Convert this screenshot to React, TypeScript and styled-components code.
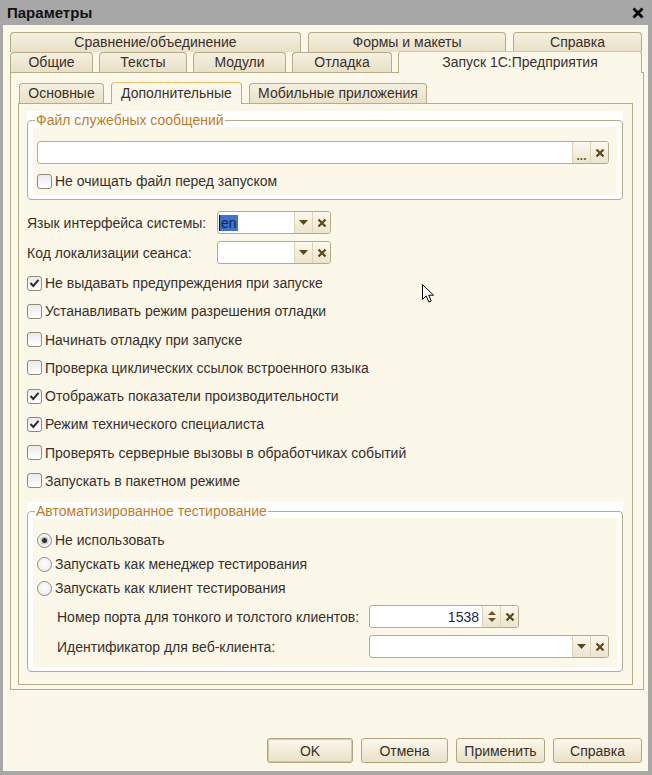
import styled, { createGlobalStyle } from "styled-components";

const GlobalStyle = createGlobalStyle`
  html, body {
    margin: 0;
    padding: 0;
  }
  body {
    font-family: "Liberation Sans", Arial, sans-serif;
    font-size: 14px;
    color: #3a2f28;
  }
  * {
    box-sizing: border-box;
  }
`;

const Window = styled.div`
  position: relative;
  width: 652px;
  height: 775px;
  background: #a7a7a7;
  display: flex;
  flex-direction: column;
  padding: 0 4px 4px 3px;
  overflow: hidden;
`;

const TitleBar = styled.div`
  height: 25px;
  margin: 0 -4px 0 -3px;
  padding: 0 8px 0 7px;
  display: flex;
  align-items: center;
  justify-content: space-between;
  font-size: 15px;
  font-weight: bold;
  color: #111;
`;

const Body = styled.div`
  flex: 1;
  background: #fbf8ea;
  display: flex;
  flex-direction: column;
`;

const TabStrip = styled.div<{ $top: number; $left: number }>`
  display: flex;
  flex-direction: column;
  padding: ${(p) => p.$top}px 0 0 ${(p) => p.$left}px;
`;

const TabRow = styled.div<{ $gap: number }>`
  display: flex;
  gap: ${(p) => p.$gap}px;
`;

const Tab = styled.div<{ $w: number; $active?: boolean }>`
  position: relative;
  z-index: ${(p) => (p.$active ? 2 : 0)};
  width: ${(p) => p.$w}px;
  height: ${(p) => (p.$active ? 22 : 20)}px;
  margin-top: ${(p) => (p.$active ? -1 : 0)}px;
  margin-bottom: ${(p) => (p.$active ? -1 : 0)}px;
  border: 1px solid #b6ac86;
  border-top-color: ${(p) => (p.$active ? "#efc46c" : "#b6ac86")};
  border-bottom: none;
  border-radius: 4px 4px 0 0;
  background: ${(p) =>
    p.$active ? "#fbf8ea" : "linear-gradient(#f5f0e0, #e8e0c6)"};
  display: flex;
  align-items: center;
  justify-content: center;
  font-size: 14px;
  padding-bottom: ${(p) => (p.$active ? 2 : 1)}px;
  white-space: nowrap;
`;

const Panel = styled.div<{ $pad: string }>`
  position: relative;
  border: 1px solid #b6ac86;
  background: #fbf8ea;
  padding: ${(p) => p.$pad};
`;

const OuterPanel = styled(Panel)`
  margin: 0 4px 0 7px;
`;

const GroupWrap = styled.div<{ $mt?: number }>`
  margin-top: ${(p) => p.$mt ?? 0}px;
  background: #fff;
  padding-top: 9px;
`;

const Frame = styled.div`
  position: relative;
  border: 1px solid #b6ac86;
  border-radius: 4px;
  background: #fff;
  padding: 6px 5px 4px 5px;
`;

const Legend = styled.span`
  position: absolute;
  top: -9px;
  left: 7px;
  padding: 0 1px;
  line-height: 16px;
  background: #fff;
  color: #c27b21;
`;

const GroupBody = styled.div<{ $pad: string }>`
  background: #fbf8ea;
  padding: ${(p) => p.$pad};
  display: flex;
  flex-direction: column;
`;

const FieldRow = styled.div<{ $mt: number; $label: number; $indent?: number }>`
  display: flex;
  align-items: center;
  margin-top: ${(p) => p.$mt}px;
  padding-left: ${(p) => p.$indent ?? 0}px;
  height: 23px;
  & > label {
    width: ${(p) => p.$label}px;
    flex: none;
    white-space: nowrap;
  }
`;

const Input = styled.div<{ $w: number }>`
  width: ${(p) => p.$w}px;
  height: 23px;
  flex: none;
  display: flex;
  border: 1px solid #b6ac86;
  border-radius: 3px;
  background: #fff;
  overflow: hidden;
`;

const InputText = styled.div<{ $right?: boolean }>`
  flex: 1;
  display: flex;
  align-items: center;
  justify-content: ${(p) => (p.$right ? "flex-end" : "flex-start")};
  padding: 0 3px 0 1px;
  color: #1f2a44;
`;

const Selected = styled.span`
  background: #3b73d4;
  color: #1b2340;
  border-left: 1px solid #111;
  padding: 0 1px;
  line-height: 16px;
`;

const InputButton = styled.div`
  width: 18px;
  flex: none;
  border-left: 1px solid #ddd4b4;
  background: linear-gradient(#fbf8ee, #ebe4cd);
  display: flex;
  flex-direction: column;
  align-items: center;
  justify-content: center;
  gap: 3px;
`;

const Dots = styled(InputButton)`
  justify-content: flex-end;
  padding-bottom: 4px;
  color: #6b5a2c;
  font-size: 12px;
  font-weight: bold;
  line-height: 6px;
`;

const CheckList = styled.div`
  margin-top: 5px;
  display: flex;
  flex-direction: column;
`;

const OptionRow = styled.div<{ $h: number; $mt?: number }>`
  height: ${(p) => p.$h}px;
  margin-top: ${(p) => p.$mt ?? 0}px;
  display: flex;
  align-items: center;
  gap: 3px;
  white-space: nowrap;
`;

const Box = styled.span`
  width: 15px;
  height: 15px;
  flex: none;
  border: 1px solid #8e8a78;
  border-radius: 3px;
  background: linear-gradient(#ebebeb, #ffffff);
  display: inline-flex;
  align-items: center;
  justify-content: center;
`;

const RadioDot = styled.span<{ $on?: boolean }>`
  width: 15px;
  height: 15px;
  flex: none;
  border-radius: 50%;
  border: 1px solid #8e8a78;
  background: radial-gradient(circle at 50% 40%, #ffffff, #e8e8e8);
  display: inline-flex;
  align-items: center;
  justify-content: center;
  &::after {
    content: "";
    display: ${(p) => (p.$on ? "block" : "none")};
    width: 5px;
    height: 5px;
    border-radius: 50%;
    background: #333;
    box-shadow: 0 0 0 1.5px #c9c9c9;
  }
`;

const Footer = styled.div`
  margin-top: auto;
  display: flex;
  justify-content: flex-end;
  gap: 8px;
  padding: 0 6px 8px 0;
`;

const Button = styled.div<{ $w: number; $default?: boolean }>`
  width: ${(p) => p.$w}px;
  height: 25px;
  border: 1px solid #b0a57e;
  border-radius: 3px;
  background: linear-gradient(#fbf8ec, #e9e1c7);
  box-shadow: ${(p) => (p.$default ? "inset 0 0 0 1px #d6cb9f" : "none")};
  display: flex;
  align-items: center;
  justify-content: center;
  font-size: 14px;
`;

const Cursor = styled.svg`
  position: absolute;
  left: 422px;
  top: 284px;
`;

const ClearIcon = () => (
  <svg width="10" height="10" viewBox="0 0 10 10">
    <path d="M1.5 1.5 L8.5 8.5 M8.5 1.5 L1.5 8.5" stroke="#5b4813" strokeWidth="2.2" />
  </svg>
);

const DropIcon = () => (
  <svg width="9" height="5" viewBox="0 0 9 5">
    <path d="M0 0 H9 L4.5 5 Z" fill="#5b4813" />
  </svg>
);

const SpinUp = () => (
  <svg width="8" height="4" viewBox="0 0 8 4">
    <path d="M0 4 H8 L4 0 Z" fill="#6b5518" />
  </svg>
);

const SpinDown = () => (
  <svg width="8" height="4" viewBox="0 0 8 4">
    <path d="M0 0 H8 L4 4 Z" fill="#6b5518" />
  </svg>
);

const Check = ({ on, text, h = 28.25 }: { on?: boolean; text: string; h?: number }) => (
  <OptionRow $h={h}>
    <Box>
      {on ? (
        <svg width="11" height="10" viewBox="0 0 11 10">
          <path d="M1.5 5 L4.3 8 L9.5 1.8" fill="none" stroke="#2b2b2b" strokeWidth="2" />
        </svg>
      ) : null}
    </Box>
    {text}
  </OptionRow>
);

const Radio = ({ on, text }: { on?: boolean; text: string }) => (
  <OptionRow $h={24}>
    <RadioDot $on={on} />
    {text}
  </OptionRow>
);

const outerBack = [
  { t: "Сравнение/объединение", w: 291 },
  { t: "Формы и макеты", w: 198 },
  { t: "Справка", w: 129 },
];

const outerFront = [
  { t: "Общие", w: 83 },
  { t: "Тексты", w: 88 },
  { t: "Модули", w: 93 },
  { t: "Отладка", w: 100 },
  { t: "Запуск 1С:Предприятия", w: 244, active: true },
];

const innerTabs = [
  { t: "Основные", w: 85 },
  { t: "Дополнительные", w: 131, active: true },
  { t: "Мобильные приложения", w: 178 },
];

const options = [
  { t: "Не выдавать предупреждения при запуске", on: true },
  { t: "Устанавливать режим разрешения отладки" },
  { t: "Начинать отладку при запуске" },
  { t: "Проверка циклических ссылок встроенного языка" },
  { t: "Отображать показатели производительности", on: true },
  { t: "Режим технического специалиста", on: true },
  { t: "Проверять серверные вызовы в обработчиках событий" },
  { t: "Запускать в пакетном режиме" },
];

export default function App() {
  return (
    <>
      <GlobalStyle />
      <Window>
        <TitleBar>
          Параметры
          <svg width="12" height="12" viewBox="0 0 12 12">
            <path d="M1.5 1.5 L10.5 10.5 M10.5 1.5 L1.5 10.5" stroke="#000" strokeWidth="2.8" />
          </svg>
        </TitleBar>
        <Body>
          <TabStrip $top={7} $left={7}>
            <TabRow $gap={7}>
              {outerBack.map((t) => (
                <Tab key={t.t} $w={t.w}>
                  {t.t}
                </Tab>
              ))}
            </TabRow>
            <TabRow $gap={6}>
              {outerFront.map((t) => (
                <Tab key={t.t} $w={t.w} $active={t.active}>
                  {t.t}
                </Tab>
              ))}
            </TabRow>
          </TabStrip>
          <OuterPanel $pad="10px 10px 4px 7px">
            <TabStrip $top={0} $left={1}>
              <TabRow $gap={7}>
                {innerTabs.map((t) => (
                  <Tab key={t.t} $w={t.w} $active={t.active}>
                    {t.t}
                  </Tab>
                ))}
              </TabRow>
            </TabStrip>
            <Panel $pad="7px 9px 12px 8px">
              <GroupWrap>
                <Frame>
                  <Legend>Файл служебных сообщений</Legend>
                  <GroupBody $pad="14px 8px 3px 4px">
                    <Input $w={572}>
                      <InputText />
                      <Dots>...</Dots>
                      <InputButton>
                        <ClearIcon />
                      </InputButton>
                    </Input>
                    <OptionRow $h={22} $mt={6}>
                      <Box />
                      Не очищать файл перед запуском
                    </OptionRow>
                  </GroupBody>
                </Frame>
              </GroupWrap>

              <FieldRow $mt={11} $label={190}>
                <label>Язык интерфейса системы:</label>
                <Input $w={114}>
                  <InputText>
                    <Selected>en</Selected>
                  </InputText>
                  <InputButton>
                    <DropIcon />
                  </InputButton>
                  <InputButton>
                    <ClearIcon />
                  </InputButton>
                </Input>
              </FieldRow>
              <FieldRow $mt={7} $label={190}>
                <label>Код локализации сеанса:</label>
                <Input $w={114}>
                  <InputText />
                  <InputButton>
                    <DropIcon />
                  </InputButton>
                  <InputButton>
                    <ClearIcon />
                  </InputButton>
                </Input>
              </FieldRow>

              <CheckList>
                {options.map((o) => (
                  <Check key={o.t} text={o.t} on={o.on} />
                ))}
              </CheckList>

              <GroupWrap $mt={7}>
                <Frame>
                  <Legend>Автоматизированное тестирование</Legend>
                  <GroupBody $pad="10px 8px 9px 4px">
                    <Radio on text="Не использовать" />
                    <Radio text="Запускать как менеджер тестирования" />
                    <Radio text="Запускать как клиент тестирования" />
                    <FieldRow $mt={5} $label={312} $indent={20}>
                      <label>Номер порта для тонкого и толстого клиентов:</label>
                      <Input $w={150}>
                        <InputText $right>1538</InputText>
                        <InputButton>
                          <SpinUp />
                          <SpinDown />
                        </InputButton>
                        <InputButton>
                          <ClearIcon />
                        </InputButton>
                      </Input>
                    </FieldRow>
                    <FieldRow $mt={7} $label={312} $indent={20}>
                      <label>Идентификатор для веб-клиента:</label>
                      <Input $w={240}>
                        <InputText />
                        <InputButton>
                          <DropIcon />
                        </InputButton>
                        <InputButton>
                          <ClearIcon />
                        </InputButton>
                      </Input>
                    </FieldRow>
                  </GroupBody>
                </Frame>
              </GroupWrap>
            </Panel>
          </OuterPanel>
          <Footer>
            <Button $w={86} $default>
              OK
            </Button>
            <Button $w={87}>Отмена</Button>
            <Button $w={89}>Применить</Button>
            <Button $w={89}>Справка</Button>
          </Footer>
        </Body>
        <Cursor width="13" height="20" viewBox="0 0 13 20">
          <path
            d="M0.5 0.5 L0.5 15.5 L4.2 12 L6.8 18 L9.2 17 L6.7 11.2 L11.5 11.2 Z"
            fill="#fff"
            stroke="#000"
            strokeWidth="1"
          />
        </Cursor>
      </Window>
    </>
  );
}
